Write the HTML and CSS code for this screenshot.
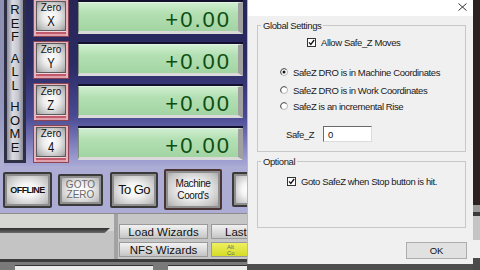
FILE: index.html
```html
<!DOCTYPE html>
<html lang="en">
<head>
    <title>Safe Z Setup</title>
    <link rel="stylesheet" href="styles.css">
</head>
<body>
    <div class="screen">
        <div class="mach">
            <div class="top">
                <div class="ref-col">
                    <div class="ref-btn">
                        <div class="ref-word"><span>R</span><span>E</span><span>F</span></div>
                        <div class="ref-word"><span>A</span><span>L</span><span>L</span></div>
                        <div class="ref-word"><span>H</span><span>O</span><span>M</span><span>E</span></div>
                    </div>
                </div>
                <div class="zero-col">
                    <div class="zero-block">
                        <div class="zero-btn"><span class="zero-label">Zero</span><span class="zero-axis">X</span></div>
                        <div class="zero-bar"></div>
                    </div>
                    <div class="zero-block">
                        <div class="zero-btn"><span class="zero-label">Zero</span><span class="zero-axis">Y</span></div>
                        <div class="zero-bar"></div>
                    </div>
                    <div class="zero-block">
                        <div class="zero-btn"><span class="zero-label">Zero</span><span class="zero-axis">Z</span></div>
                        <div class="zero-bar"></div>
                    </div>
                    <div class="zero-block">
                        <div class="zero-btn"><span class="zero-label">Zero</span><span class="zero-axis">4</span></div>
                        <div class="zero-bar"></div>
                    </div>
                </div>
                <div class="dro-col">
                    <div class="dro">+0.00</div>
                    <div class="dro">+0.00</div>
                    <div class="dro">+0.00</div>
                    <div class="dro">+0.00</div>
                </div>
            </div>
            <div class="btn-row">
                <div class="mbtn offline">OFFLINE</div>
                <div class="mbtn goto">GOTO<br>ZERO</div>
                <div class="mbtn togo">To Go</div>
                <div class="mbtn machine">Machine<br>Coord's</div>
                <div class="mbtn partial"></div>
            </div>
            <div class="lower">
                <div class="slider-panel"><div class="slider-bar"></div></div>
                <div class="wiz-panel">
                    <div class="wbtn">Load Wizards</div>
                    <div class="wbtn side">Last</div>
                    <div class="wbtn">NFS Wizards</div>
                    <div class="wbtn side yellow">Alt<br>Co</div>
                </div>
            </div>
            <div class="status-strip"><span class="status-box wide"></span><span class="status-box"></span></div>
        </div>

        <div class="dialog">
            <div class="titlebar">
                <svg width="9" height="8" viewBox="0 0 9 8"><path d="M0.5 0.5 L8.5 7.5 M8.5 0.5 L0.5 7.5" stroke="#333" stroke-width="1" fill="none"/></svg>
            </div>
            <div class="dialog-body">
                <fieldset class="group global">
                    <legend>Global Settings</legend>
                    <div class="opt allow-row">
                        <svg width="9" height="9" viewBox="0 0 9 9"><rect x="0.5" y="0.5" width="8" height="8" fill="#fff" stroke="#333"/><path d="M2 4.4 L3.8 6.4 L7.2 2" fill="none" stroke="#111" stroke-width="1.3"/></svg>
                        <span>Allow Safe_Z Moves</span>
                    </div>
                    <div class="opt radio-row first-radio">
                        <svg width="8" height="8" viewBox="0 0 8 8"><circle cx="4" cy="4" r="3.5" fill="#fff" stroke="#b4b4b4"/><path d="M1.53 6.47 A3.5 3.5 0 0 1 6.47 1.53" fill="none" stroke="#555"/><circle cx="4" cy="4" r="1.5" fill="#111"/></svg>
                        <span>SafeZ DRO is in Machine Coordinates</span>
                    </div>
                    <div class="opt radio-row">
                        <svg width="8" height="8" viewBox="0 0 8 8"><circle cx="4" cy="4" r="3.5" fill="#fff" stroke="#b4b4b4"/><path d="M1.53 6.47 A3.5 3.5 0 0 1 6.47 1.53" fill="none" stroke="#555"/></svg>
                        <span>SafeZ DRO is in Work Coordinates</span>
                    </div>
                    <div class="opt radio-row last-radio">
                        <svg width="8" height="8" viewBox="0 0 8 8"><circle cx="4" cy="4" r="3.5" fill="#fff" stroke="#b4b4b4"/><path d="M1.53 6.47 A3.5 3.5 0 0 1 6.47 1.53" fill="none" stroke="#555"/></svg>
                        <span>SafeZ is an incremental Rise</span>
                    </div>
                    <div class="safe-row">
                        <span class="safe-label">Safe_Z</span>
                        <input class="safe-input" type="text" value="0">
                    </div>
                </fieldset>
                <fieldset class="group optional">
                    <legend>Optional</legend>
                    <div class="opt stop-row">
                        <svg width="9" height="9" viewBox="0 0 9 9"><rect x="0.5" y="0.5" width="8" height="8" fill="#fff" stroke="#333"/><path d="M2 4.4 L3.8 6.4 L7.2 2" fill="none" stroke="#111" stroke-width="1.3"/></svg>
                        <span>Goto SafeZ when Stop button is hit.</span>
                    </div>
                </fieldset>
                <button class="ok-btn">OK</button>
            </div>
        </div>
        <div class="edge"></div>
    </div>
</body>
</html>
```

FILE: styles.css
```css
body {
    margin: 0;
    padding: 0;
    font-family: 'Liberation Sans', Arial, sans-serif;
    background: #4a4a4a;
}
.screen {
    width: 480px;
    height: 270px;
    display: flex;
    overflow: hidden;
    background: #4e4e4e;
}

/* ---- Mach3 screen behind the dialog ---- */
.mach {
    width: 247px;
    flex: none;
    display: flex;
    flex-direction: column;
    overflow: hidden;
}
.top {
    height: 166px;
    display: flex;
    background: linear-gradient(180deg, #262656 0%, #2c2c66 40%, #4a4a94 70%, #8a8ac4 90%, #a8a8d6 100%);
}
.ref-col {
    width: 33px;
    flex: none;
    padding-left: 4px;
    box-sizing: border-box;
    background: linear-gradient(to right, rgba(176,180,206,0.75) 0 4px, transparent 4px);
}
.ref-btn {
    width: 22px;
    height: 163px;
    box-sizing: border-box;
    border: 3px solid #2e2e44;
    border-top: none;
    background: linear-gradient(to right, #8c8c9a, #dcdce4 35%, #c6c6ce 70%, #8a8a98);
    display: flex;
    flex-direction: column;
    align-items: center;
    padding-top: 3px;
    gap: 8px;
}
.ref-word {
    display: flex;
    flex-direction: column;
    align-items: center;
    font-size: 13px;
    line-height: 13.5px;
    color: #111;
}
.zero-col {
    width: 36px;
    flex: none;
    display: flex;
    flex-direction: column;
    gap: 4px;
    margin-top: -1px;
}
.zero-block {
    height: 38px;
    box-sizing: border-box;
    border: 1px solid #8c4452;
    background: #e6b4bc;
    padding: 1px 2px 0;
    display: flex;
    flex-direction: column;
}
.zero-btn {
    flex: 1;
    border: 1px solid #5c5c5c;
    background: radial-gradient(ellipse at 50% 50%, #ffffff 0%, #ececec 40%, #b4b4b4 85%, #8c8c8c 100%);
    display: flex;
    flex-direction: column;
    align-items: center;
    justify-content: center;
    color: #111;
}
.zero-label {
    font-size: 10px;
    line-height: 10px;
}
.zero-axis {
    font-size: 15px;
    line-height: 16px;
    display: inline-block;
    transform: scaleX(0.75);
}
.zero-bar {
    height: 5px;
    background: linear-gradient(#f4d4da 0 1px, #c05a6a 1px 3px, #e0a0ac 3px);
}
.dro-col {
    flex: 1;
    padding: 2px 4px 0 9px;
    display: flex;
    flex-direction: column;
    gap: 10px;
}
.dro {
    height: 32px;
    box-sizing: border-box;
    background: linear-gradient(#d0eed0 0%, #b4e0b4 35%, #a2d4a2 100%);
    border-top: 1px solid #e4f2e4;
    border-left: 1px solid #7a907a;
    border-right: 5px solid #a0a0a0;
    border-bottom: 3px solid #dadada;
    box-shadow: 0 -2px 0 #12122e;
    display: flex;
    align-items: center;
    justify-content: flex-end;
    padding: 6px 7px 0 0;
    font-size: 22px;
    letter-spacing: 2px;
    color: #0c4e12;
}
.btn-row {
    height: 47px;
    display: flex;
    align-items: center;
    padding-left: 3px;
    gap: 6px;
    background: #acacd4;
}
.mbtn {
    flex: none;
    box-sizing: border-box;
    border: 2px solid #3a3a3a;
    border-radius: 2px;
    box-shadow: inset 0 0 0 2px #8e8e8e;
    background: radial-gradient(ellipse at center, #ffffff 0%, #f4f4f4 30%, #c4c4c4 75%, #9a9a9a 100%);
    display: flex;
    align-items: center;
    justify-content: center;
    text-align: center;
    color: #111;
}
.offline {
    width: 49px;
    height: 36px;
    font-size: 9px;
    font-weight: bold;
    letter-spacing: -0.6px;
}
.goto {
    width: 45px;
    height: 32px;
    font-size: 10px;
    line-height: 10px;
    color: #6a6a6a;
}
.togo {
    width: 48px;
    height: 36px;
    margin-left: 1px;
    font-size: 13px;
    letter-spacing: -0.6px;
}
.machine {
    width: 58px;
    height: 41px;
    border-color: #4a3434;
    font-size: 10px;
    line-height: 12px;
    letter-spacing: -0.4px;
}
.partial {
    width: 30px;
    height: 35px;
    margin-left: 4px;
}
.lower {
    height: 49px;
    box-sizing: border-box;
    display: flex;
    background: #c6c6c6;
    border-top: 1px solid #8c8c8c;
    border-bottom: 3px solid #3c3c3c;
}
.slider-panel {
    width: 118px;
    flex: none;
    box-sizing: border-box;
    padding-top: 14px;
    border-right: 4px solid #a2a2a2;
    background: linear-gradient(#d6d6d2 0 17px, #c4c4c4 17px);
}
.slider-bar {
    width: 110px;
    height: 5px;
    background: linear-gradient(#2e2e2e, #6a6a6a);
    clip-path: polygon(0 0, 100% 0, 95% 100%, 0 100%);
}
.wiz-panel {
    flex: 1;
    display: grid;
    grid-template-columns: 89px 60px;
    grid-template-rows: 15px 15px;
    gap: 3px;
    padding: 10px 0 0 1px;
}
.wbtn {
    box-sizing: border-box;
    background: linear-gradient(#f2f2f2, #d8d8d8 60%, #c4c4c4);
    border: 1px solid #9a9a9a;
    font-size: 11.5px;
    color: #111;
    display: flex;
    align-items: center;
    justify-content: center;
    white-space: nowrap;
}
.side {
    justify-content: flex-start;
    padding-left: 13px;
}
.yellow {
    display: block;
    background: linear-gradient(#eef060, #d4dc28);
    font-size: 6px;
    line-height: 6px;
    color: #666;
    padding: 1px 0 0 15px;
}
.status-strip {
    height: 8px;
    box-sizing: border-box;
    display: flex;
    gap: 15px;
    padding: 3px 0 0 15px;
    background: #7a7a7a;
}
.status-box {
    width: 80px;
    height: 5px;
    background: #ececec;
    border-top: 1px solid #333;
}
.status-box.wide {
    width: 140px;
}

/* ---- Safe Z dialog ---- */
.dialog {
    width: 226px;
    height: 264px;
    flex: none;
    box-sizing: border-box;
    border-left: 1px solid #b8b8b8;
    background: #f0f0f0;
    display: flex;
    flex-direction: column;
    font-size: 9.5px;
    letter-spacing: -0.4px;
    color: #1a1a1a;
}
.titlebar {
    height: 16px;
    flex: none;
    box-sizing: border-box;
    background: #fff;
    display: flex;
    justify-content: flex-end;
    align-items: flex-start;
    padding: 3px 6px 0 0;
}
.dialog-body {
    display: flex;
    flex-direction: column;
    padding: 4px 7px 0 9px;
}
.group {
    margin: 0;
    padding: 0 0 9px;
    border: 1px solid #c8c8c8;
    min-width: 0;
}
.group legend {
    padding: 0 2px;
    margin-left: 3px;
    line-height: 11px;
}
.optional {
    margin-top: 4px;
    padding-bottom: 40px;
}
.opt {
    display: flex;
    align-items: center;
    height: 12px;
    gap: 5px;
}
.allow-row {
    margin-top: 5px;
    padding-left: 49px;
}
.radio-row {
    margin-top: 6px;
    padding-left: 22px;
}
.first-radio {
    margin-top: 18px;
}
.last-radio {
    margin-top: 4px;
}
.safe-row {
    display: flex;
    align-items: center;
    margin-top: 14px;
    padding-left: 28px;
    height: 16px;
}
.safe-label {
    width: 37px;
}
.safe-input {
    width: 49px;
    height: 16px;
    box-sizing: border-box;
    margin: 0;
    padding: 0 4px;
    border: 1px solid;
    border-color: #6a6a6a #dcdcdc #dcdcdc #6a6a6a;
    background: #fff;
    font-family: inherit;
    font-size: 9.5px;
    color: #111;
    outline: none;
}
.stop-row {
    margin-top: 8px;
    padding-left: 29px;
}
.ok-btn {
    align-self: flex-end;
    margin: 14px -1px 0 0;
    width: 61px;
    height: 17px;
    border: 1px solid #adadad;
    background: #e1e1e1;
    font-family: inherit;
    font-size: 9.5px;
    color: #111;
    padding: 0;
}
.edge {
    flex: 1;
    background: linear-gradient(#2c2020 0 205px, #9a9a9a 205px 212px, #3a3a3a 212px 216px, #c4c4c4 216px 240px, #f0f0f0 240px 258px, #4a4a4a 258px);
}
```
